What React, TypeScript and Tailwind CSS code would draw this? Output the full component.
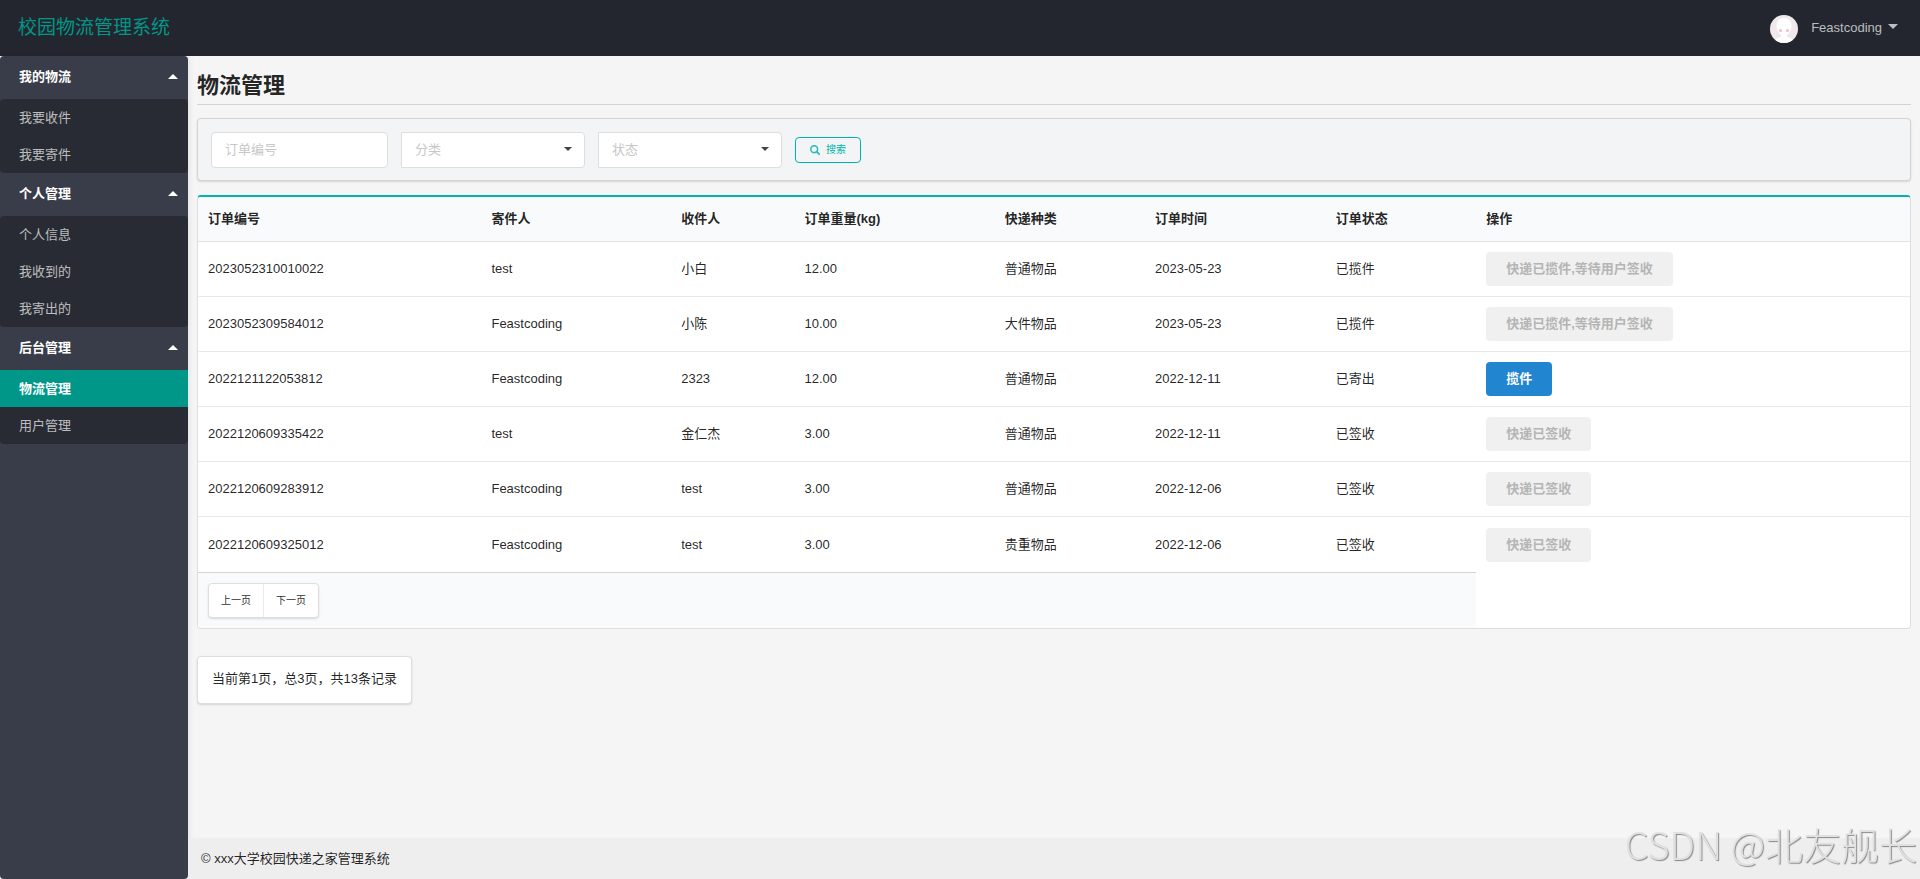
import { useState } from 'react'
import clsx from 'clsx'

interface MenuGroup {
  title: string
  items: string[]
}

interface Order {
  id: string
  sender: string
  receiver: string
  weight: string
  type: string
  date: string
  status: string
  action: string
  canPickup?: boolean
}

const MENU: MenuGroup[] = [
  { title: '我的物流', items: ['我要收件', '我要寄件'] },
  { title: '个人管理', items: ['个人信息', '我收到的', '我寄出的'] },
  { title: '后台管理', items: ['物流管理', '用户管理'] },
]

const COLUMNS = ['订单编号', '寄件人', '收件人', '订单重量(kg)', '快递种类', '订单时间', '订单状态', '操作']

const ORDERS: Order[] = [
  { id: '2023052310010022', sender: 'test', receiver: '小白', weight: '12.00', type: '普通物品', date: '2023-05-23', status: '已揽件', action: '快递已揽件,等待用户签收' },
  { id: '2023052309584012', sender: 'Feastcoding', receiver: '小陈', weight: '10.00', type: '大件物品', date: '2023-05-23', status: '已揽件', action: '快递已揽件,等待用户签收' },
  { id: '2022121122053812', sender: 'Feastcoding', receiver: '2323', weight: '12.00', type: '普通物品', date: '2022-12-11', status: '已寄出', action: '揽件', canPickup: true },
  { id: '2022120609335422', sender: 'test', receiver: '金仁杰', weight: '3.00', type: '普通物品', date: '2022-12-11', status: '已签收', action: '快递已签收' },
  { id: '2022120609283912', sender: 'Feastcoding', receiver: 'test', weight: '3.00', type: '普通物品', date: '2022-12-06', status: '已签收', action: '快递已签收' },
  { id: '2022120609325012', sender: 'Feastcoding', receiver: 'test', weight: '3.00', type: '贵重物品', date: '2022-12-06', status: '已签收', action: '快递已签收' },
]

function Header() {
  return (
    <header className="flex h-14 shrink-0 items-center justify-between bg-[#23262e] pl-[18px] pr-[22px]">
      <a href="#" className="text-[19px] leading-6 text-[#009688]">校园物流管理系统</a>
      <button type="button" className="flex items-center pt-px text-white/70">
        <svg viewBox="0 0 28 28" className="mr-[13px] size-7 rounded-full">
          <rect width="28" height="28" fill="#eee9ed" />
          <path d="M14 3c-5 0-7.500 3.500-7.500 8 0 4 2 7.500 4.500 9v2c-3 .5-5 1.500-6 3v3h18v-3c-1-1.500-3-2.500-6-3v-2c2.500-1.500 4.500-5 4.500-9 0-4.500-2.500-8-7.500-8z" fill="#fff" />
          <circle cx="10.500" cy="15.500" r="1.500" fill="#f7bccb" />
          <circle cx="17.500" cy="15.500" r="1.500" fill="#f7bccb" />
        </svg>
        <span className="pb-[2px]">Feastcoding</span>
        <svg viewBox="0 0 10 5" className="mb-1 ml-[6px] h-[5px] w-[10px]" fill="currentColor">
          <path d="M0 0h10L5 5z" />
        </svg>
      </button>
    </header>
  )
}

function Sidebar() {
  const [active, setActive] = useState('物流管理')
  const [closed, setClosed] = useState<string[]>([])

  const toggle = (title: string) => {
    setClosed((prev) => (prev.includes(title) ? prev.filter((t) => t !== title) : [...prev, title]))
  }

  return (
    <nav className="w-[188px] shrink-0 rounded-sm bg-[#393d49] shadow-[0_0_6px_rgba(34,36,38,0.12)]">
      {MENU.map((group) => {
        const open = !closed.includes(group.title)
        return (
          <div key={group.title}>
            <button
              type="button"
              aria-expanded={open}
              onClick={() => toggle(group.title)}
              className="flex h-[43px] w-full items-center justify-between pb-[2px] pl-[19px] pr-[10px] font-bold text-white"
            >
              {group.title}
              <svg viewBox="0 0 10 5" className={clsx('h-[5px] w-[10px]', !open && 'rotate-180')} fill="currentColor">
                <path d="M0 5h10L5 0z" />
              </svg>
            </button>
            {open && (
              <div className="rounded-sm bg-[#282b33]">
                {group.items.map((item) => (
                  <a
                    key={item}
                    href="#"
                    onClick={() => setActive(item)}
                    className={clsx(
                      'flex h-[37px] items-center pl-[19px]',
                      item === active ? 'bg-[#009688] font-bold text-white' : 'text-white/70'
                    )}
                  >
                    {item}
                  </a>
                ))}
              </div>
            )}
          </div>
        )
      })}
    </nav>
  )
}

function FilterSelect({ label, options }: { label: string; options: string[] }) {
  return (
    <div className="relative">
      <select
        aria-label={label}
        defaultValue=""
        className="h-9 w-[184px] appearance-none rounded-r border border-[#dededf] bg-white px-[13px] pb-px text-[#c7c7c7] outline-none"
      >
        <option value="">{label}</option>
        {options.map((option) => (
          <option key={option}>{option}</option>
        ))}
      </select>
      <svg viewBox="0 0 8 4" className="pointer-events-none absolute right-[13px] top-[15px] h-1 w-2" fill="#444">
        <path d="M0 0h8L4 4z" />
      </svg>
    </div>
  )
}

function SearchBar() {
  return (
    <form
      onSubmit={(e) => e.preventDefault()}
      className="mt-[13px] flex items-center gap-[13px] rounded border border-[#d4d4d5] bg-[#f3f4f5] px-[13px] pb-3 pt-[13px] shadow-[0_1px_2px_rgba(34,36,38,0.15)]"
    >
      <input
        type="text"
        aria-label="订单编号"
        placeholder="订单编号"
        className="h-9 w-[177px] rounded border border-[#dededf] bg-white px-[13px] pb-px outline-none placeholder:text-[#c7c7c7]"
      />
      <FilterSelect label="分类" options={['普通物品', '大件物品', '贵重物品']} />
      <FilterSelect label="状态" options={['已寄出', '已揽件', '已签收']} />
      <button
        type="submit"
        className="flex h-[26px] w-[66px] items-center justify-center gap-[6px] rounded border border-[#00b5ad] text-[10px] text-[#00b5ad]"
      >
        <svg viewBox="0 0 10 10" className="size-[10px] opacity-85" fill="none" stroke="currentColor">
          <circle cx="4.200" cy="4.200" r="3.400" strokeWidth="1.500" />
          <path d="M6.600 6.600L9.200 9.200" strokeWidth="1.800" strokeLinecap="round" />
        </svg>
        搜索
      </button>
    </form>
  )
}

function OrderTable() {
  return (
    <div className="mt-[14px] overflow-hidden rounded border border-t-2 border-[#dededf] border-t-[#00b5ad] bg-white">
      <table className="w-full border-separate border-spacing-0 text-left">
        <thead className="bg-[#f9fafb]">
          <tr className="h-[45px]">
            {COLUMNS.map((column) => (
              <th key={column} className="whitespace-nowrap border-b border-[#e1e2e3] px-[10px] font-bold">{column}</th>
            ))}
          </tr>
        </thead>
        <tbody>
          {ORDERS.map((order, index) => (
            <tr
              key={order.id}
              className={clsx('h-[55px] [&>td]:px-[10px]', index < ORDERS.length - 1 && '[&>td]:border-b [&>td]:border-[#e8e9e9]')}
            >
              <td>{order.id}</td>
              <td>{order.sender}</td>
              <td>{order.receiver}</td>
              <td>{order.weight}</td>
              <td>{order.type}</td>
              <td>{order.date}</td>
              <td>{order.status}</td>
              <td>
                <button
                  type="button"
                  disabled={!order.canPickup}
                  className={clsx(
                    'mr-px block h-[34px] whitespace-nowrap rounded px-5 font-bold',
                    order.canPickup ? 'bg-[#2185d0] text-white' : 'bg-[#f0f0f0] text-[#b5b5b5]'
                  )}
                >
                  {order.action}
                </button>
              </td>
            </tr>
          ))}
        </tbody>
        <tfoot>
          <tr className="h-14">
            <td colSpan={7} className="rounded-br border-t border-[#d4d5d6] bg-[#f9fafb] px-[10px]">
              <div className="inline-flex rounded border border-[#dededf] bg-white align-middle text-[10px] shadow-[0_1px_2px_rgba(34,36,38,0.15)]">
                <button type="button" className="h-[33px] w-[55px] border-r border-[#e8e9e9]">上一页</button>
                <button type="button" className="h-[33px] w-[54px]">下一页</button>
              </div>
            </td>
          </tr>
        </tfoot>
      </table>
    </div>
  )
}

export default function App() {
  return (
    <div className="flex min-h-screen flex-col bg-[#f5f5f5] font-['Liberation_Sans','Noto_Sans_CJK_SC',sans-serif] text-[13px] leading-[18px] text-black/87">
      <Header />
      <div className="flex flex-1">
        <Sidebar />
        <div className="flex min-w-0 flex-1 flex-col">
          <main className="flex-1 px-[9px] pt-4">
            <h1 className="border-b border-[#d4d4d5] pb-1 text-[22px] font-bold leading-7">物流管理</h1>
            <SearchBar />
            <OrderTable />
            <div className="mt-[27px] inline-block rounded border border-[#dededf] bg-white px-[14px] pb-[15px] pt-[13px] shadow-[0_1px_2px_rgba(34,36,38,0.15)]">
              当前第1页，总3页，共13条记录
            </div>
          </main>
          <footer className="flex h-[41px] items-center bg-[#eee] px-[13px]">© xxx大学校园快递之家管理系统</footer>
        </div>
      </div>
      <div className="pointer-events-none fixed bottom-[7px] right-[3px] font-['Noto_Sans_CJK_SC',sans-serif] text-[38px] font-light leading-[56px] text-[#e0e0e0] [text-shadow:1px_1px_1px_#888]">
        CSDN @北友舰长
      </div>
    </div>
  )
}
